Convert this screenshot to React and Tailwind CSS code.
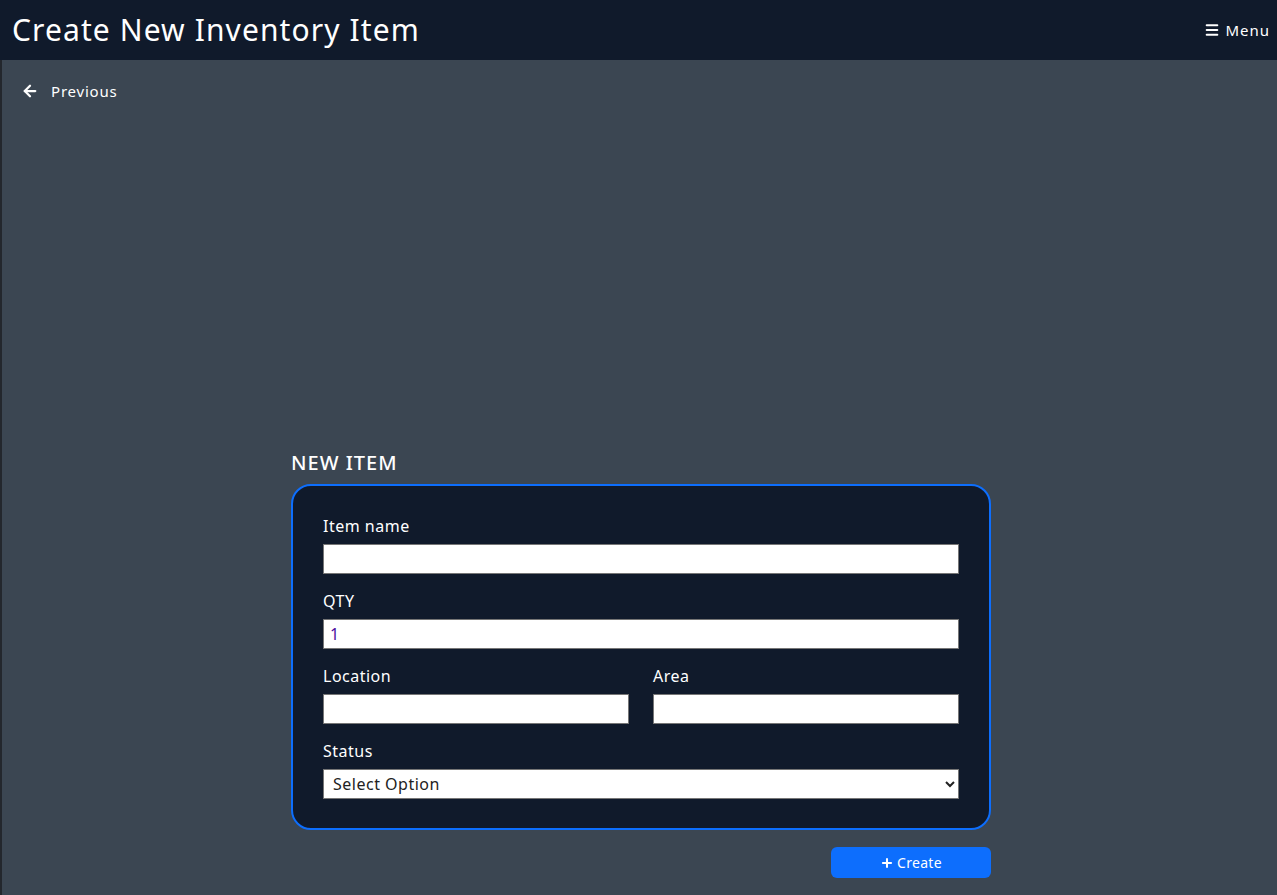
import { ArrowLeft, Menu, Plus } from "lucide-react";

function Field({ label, children }) {
  return (
    <div className="flex flex-col">
      <label className="text-[16px] leading-6 mb-[6px] text-white tracking-[0.5px]">{label}</label>
      {children}
    </div>
  );
}

const inputCls = "h-[30px] w-full bg-white border border-[#767676] px-[6px] text-[16px] text-[#4b0fa0] outline-none";

export default function App() {
  return (
    <div className="min-h-[895px] flex flex-col bg-[#3b4652] text-white font-['Noto_Sans',sans-serif]">
      {/* Header */}
      <header className="h-[60px] shrink-0 flex items-center justify-between pl-3 pr-[7px] bg-[#101a2b]">
        <h1 className="text-[30px] leading-none font-normal tracking-[1.1px]">Create New Inventory Item</h1>
        <button className="flex items-center gap-[5px] text-[15px] tracking-[1px]">
          <Menu className="w-[16px] h-[16px]" strokeWidth={3} />
          Menu
        </button>
      </header>

      <main className="flex-1 flex flex-col border-l-2 border-[#23272d]">
        {/* Back link */}
        <div className="pl-[19px] pt-[20px]">
          <button className="flex items-center gap-[12px] text-[15px] leading-[22px] text-white tracking-[0.8px]">
            <ArrowLeft className="w-[18px] h-[18px]" strokeWidth={3} />
            Previous
          </button>
        </div>

        {/* Form */}
        <section className="w-[700px] ml-[289px] mt-[349px]">
          <h2 className="text-[20px] leading-6 uppercase font-medium mb-[9px] tracking-[1px]">New Item</h2>
          <form className="rounded-[20px] border-2 border-[#0d6efd] bg-[#101a2b] pt-[28px] pb-[29px] px-[30px] flex flex-col gap-[15px]">
            <Field label="Item name">
              <input className={inputCls} />
            </Field>
            <Field label="QTY">
              <input className={inputCls} defaultValue="1" />
            </Field>
            <div className="grid grid-cols-2 gap-6">
              <Field label="Location">
                <input className={inputCls} />
              </Field>
              <Field label="Area">
                <input className={inputCls} />
              </Field>
            </div>
            <Field label="Status">
              <select className="h-[30px] w-full bg-white border border-[#767676] px-[5px] text-[16px] text-[#222] tracking-[0.5px] outline-none" defaultValue="">
                <option value="">Select Option</option>
                <option value="in">In Stock</option>
                <option value="out">Out of Stock</option>
              </select>
            </Field>
          </form>
          <div className="flex justify-end mt-[17px]">
            <button className="w-[160px] h-[31px] rounded-md bg-[#0d6efd] text-white text-[14px] flex items-center justify-center gap-[3px] tracking-[0.3px]">
              <Plus className="w-[14px] h-[14px]" strokeWidth={3.5} />
              Create
            </button>
          </div>
        </section>
      </main>
    </div>
  );
}
